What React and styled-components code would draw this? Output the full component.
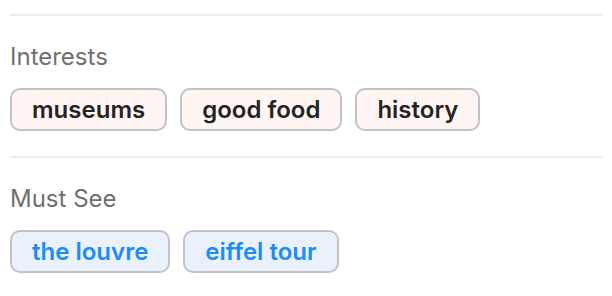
import React from "react";
import styled, { createGlobalStyle } from "styled-components";

const GlobalStyle = createGlobalStyle`
  body {
    margin: 0;
    background: #ffffff;
    font-family: Inter, "Noto Sans", sans-serif;
  }
`;

const sections = [
  { title: "Interests", tone: "warm", items: ["museums", "good food", "history"] },
  { title: "Must See", tone: "cool", items: ["the louvre", "eiffel tour"] },
];

const App = () => {
  return (
    <Wrap>
      <GlobalStyle />
      {sections.map((section) => (
        <Section key={section.title}>
          <Label>{section.title}</Label>
          <ChipRow>
            {section.items.map((item) => (
              <Chip key={item} $tone={section.tone}>
                {item}
              </Chip>
            ))}
          </ChipRow>
        </Section>
      ))}
    </Wrap>
  );
};

const Wrap = styled.div`
  display: flex;
  flex-direction: column;
  padding: 14px 10px 0 10px;
`;
const Section = styled.div`
  display: flex;
  flex-direction: column;
  border-top: 2px solid #ececec;
  padding-top: 27px;
  padding-bottom: 25px;
`;
const Label = styled.div`
  font-size: 24px;
  line-height: 28px;
  color: #6f6f6f;
  margin-bottom: 17px;
`;
const ChipRow = styled.div`
  display: flex;
  flex-direction: row;
  gap: 13px;
`;
const Chip = styled.div`
  box-sizing: border-box;
  height: 43px;
  display: flex;
  align-items: center;
  padding: 0 20px;
  border: 2px solid #c2c2c2;
  border-radius: 10px;
  font-size: 24px;
  font-weight: 600;
  background: ${(p) => (p.$tone === "cool" ? "#eaf1fd" : "#fff6f4")};
  color: ${(p) => (p.$tone === "cool" ? "#1f8cf5" : "#242424")};
`;

export default App;
